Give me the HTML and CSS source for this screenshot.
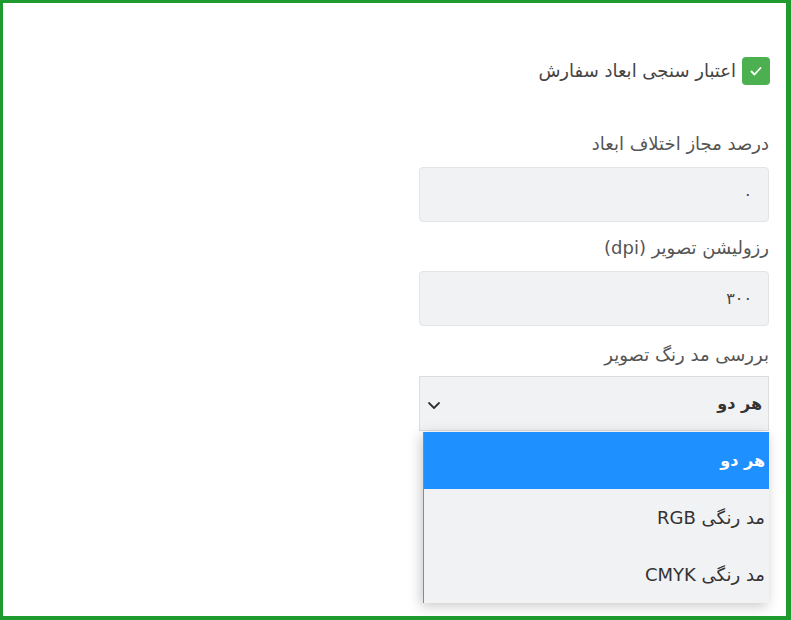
FILE: index.html
```html
<!DOCTYPE html>
<html lang="fa" dir="rtl">
<head>
<meta charset="utf-8">
<title>تنظیمات</title>
<link rel="stylesheet" href="styles.css">
</head>
<body>
<div class="frame">
  <div class="form">
    <label class="check-row">
      <span class="checkbox">
        <svg width="14" height="14" viewBox="0 0 14 14"><path d="M2.5 7.5 L5.5 10.5 L11.5 4" fill="none" stroke="#fff" stroke-width="1.8" stroke-linecap="round" stroke-linejoin="round"/></svg>
      </span>
      <span class="check-text">اعتبار سنجی ابعاد سفارش</span>
    </label>

    <div class="field first">
      <div class="label">درصد مجاز اختلاف ابعاد</div>
      <div class="input">۰</div>
    </div>

    <div class="field">
      <div class="label">رزولیشن تصویر <span class="ltr">(dpi)</span></div>
      <div class="input">۳۰۰</div>
    </div>

    <div class="field">
      <div class="label">بررسی مد رنگ تصویر</div>
      <div class="select-wrap">
        <div class="select">
          <span class="select-value">هر دو</span>
          <svg class="chev" width="14" height="10" viewBox="0 0 14 10"><path d="M2 3 L7 8 L12 3" fill="none" stroke="#333" stroke-width="1.8" stroke-linecap="round" stroke-linejoin="round"/></svg>
        </div>
        <ul class="menu">
          <li class="opt active">هر دو</li>
          <li class="opt">مد رنگی RGB</li>
          <li class="opt">مد رنگی CMYK</li>
        </ul>
      </div>
    </div>
  </div>
</div>
</body>
</html>
```
FILE: styles.css
```css
* { box-sizing: border-box; }
html, body { margin: 0; padding: 0; background: #fff; }
body {
  font-family: "DejaVu Sans", "Noto Sans", sans-serif;
  color: #555;
}
.frame {
  width: 791px;
  height: 620px;
  border-style: solid;
  border-color: #1f9a2e;
  border-width: 3px 5px 4px 3px;
  overflow: hidden;
  padding: 53px 17px 0 0;
}
.form {
  width: 350px;
  margin-right: 0;
  margin-left: auto;
  display: flex;
  flex-direction: column;
}
.check-row {
  display: flex;
  align-items: center;
  gap: 6px;
  margin-right: -1px;
}
.checkbox {
  width: 28px;
  height: 28px;
  border-radius: 4px;
  background: #4caf50;
  display: flex;
  align-items: center;
  justify-content: center;
  flex: none;
}
.check-text {
  font-size: 18px;
  color: #444;
  line-height: 30px;
}
.field { display: flex; flex-direction: column; }
.field.first { margin-top: 43px; }
.field + .field { margin-top: 11px; }
.field:last-child { margin-top: 14px; }
.label {
  font-size: 18px;
  line-height: 30px;
  color: #555;
  margin-bottom: 8px;
}
.field:last-child .label { margin-bottom: 6px; }
.ltr { unicode-bidi: isolate; }
.input {
  height: 55px;
  background: #f1f2f4;
  border: 1px solid #e3e4e7;
  border-radius: 4px;
  display: flex;
  align-items: center;
  padding: 0 16px;
  font-size: 16px;
  color: #444;
}
.select-wrap { position: relative; }
.select {
  height: 55px;
  background: #f1f2f4;
  border: 1px solid #dcdde0;
  display: flex;
  align-items: center;
  justify-content: space-between;
  padding: 0 6px 0 7px;
}
.select-value {
  font-size: 16px;
  font-weight: bold;
  color: #333;
}
.chev { margin-top: 3px; }
.menu {
  position: absolute;
  top: 56px;
  right: 0;
  width: 346px;
  margin: 0;
  padding: 0;
  list-style: none;
  background: #f1f2f4;
  border-left: 1px solid #8a8a8a;
  box-shadow: -2px 3px 12px rgba(0, 0, 0, 0.22);
}
.opt {
  height: 57px;
  display: flex;
  align-items: center;
  padding: 0 4px;
  font-size: 18px;
  color: #333;
}
.opt.active {
  background: #1e90ff;
  color: #fff;
  font-weight: bold;
  font-size: 16px;
}
```
